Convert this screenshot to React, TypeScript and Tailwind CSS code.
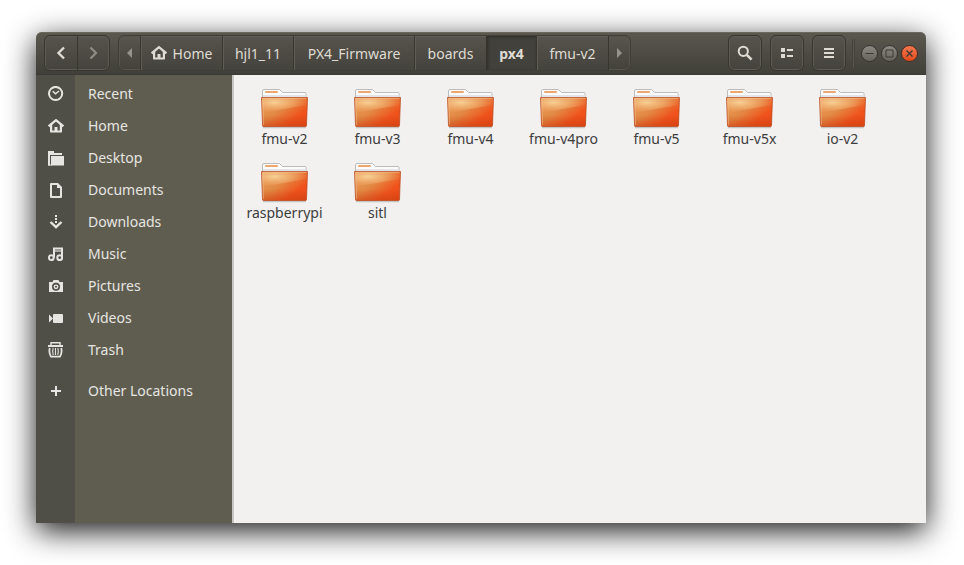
import type { ReactNode } from "react";

const folders = [
  "fmu-v2",
  "fmu-v3",
  "fmu-v4",
  "fmu-v4pro",
  "fmu-v5",
  "fmu-v5x",
  "io-v2",
  "raspberrypi",
  "sitl",
];

function Icon({ children }: { children: ReactNode }) {
  return (
    <svg className="h-4 w-4 shrink-0" viewBox="0 0 16 16" fill="none" stroke="currentColor" strokeWidth="2" aria-hidden="true">
      {children}
    </svg>
  );
}

function HomeIcon() {
  return (
    <Icon>
      <path strokeWidth="2.200" d="M0.600 8.300 8 2.100l7.400 6.200" />
      <path fill="currentColor" stroke="none" d="M2 7.500l2.200-1.700V12.500H6.500V9h3v3.500h2.300V5.800L14 7.500v6.300q0 .7-.7.700H2.700q-.7 0-.7-.7z" />
    </Icon>
  );
}

const places: { name: string; icon: ReactNode }[] = [
  {
    name: "Recent",
    icon: (
      <Icon>
        <circle cx="7.600" cy="7.500" r="6.600" />
        <path strokeWidth="1.500" d="M4.700 5.200 7.500 7.800 11 5" />
      </Icon>
    ),
  },
  { name: "Home", icon: <HomeIcon /> },
  {
    name: "Desktop",
    icon: (
      <Icon>
        <path fill="currentColor" stroke="none" d="M0 1h6v2h8v2H2v10.500H0z" />
        <path fill="currentColor" stroke="none" d="M3 6h13v9.500H3z" />
        <path fill="currentColor" stroke="none" d="M0 14.500h4v1H0z" />
      </Icon>
    ),
  },
  {
    name: "Documents",
    icon: (
      <Icon>
        <path d="M3 2h6.500L13 5.500V15H3z" strokeLinejoin="round" />
        <path fill="currentColor" stroke="none" d="M9 1.500 13.500 6H9z" />
      </Icon>
    ),
  },
  {
    name: "Downloads",
    icon: (
      <Icon>
        <path d="M8 1v9" strokeDasharray="2 1" />
        <path strokeWidth="2.400" d="M2.500 8 8 13.200 13.500 8" />
      </Icon>
    ),
  },
  {
    name: "Music",
    icon: (
      <Icon>
        <circle cx="3.300" cy="11.700" r="2.400" />
        <circle cx="11.700" cy="11.700" r="2.400" />
        <path d="M6 11.500V2.500h8v9" />
        <path strokeWidth="1.200" d="M6 5h8" />
      </Icon>
    ),
  },
  {
    name: "Pictures",
    icon: (
      <Icon>
        <path fill="currentColor" stroke="none" fillRule="evenodd" d="M1 4h3.500l1-2h5l1 2H15v10H1zM8 4.800a4 4 0 1 0 0 8 4 4 0 0 0 0-8z" />
        <circle cx="8" cy="8.800" r="2.400" fill="currentColor" stroke="none" />
        <circle cx="8" cy="8.800" r="1" fill="#504f47" stroke="none" />
      </Icon>
    ),
  },
  {
    name: "Videos",
    icon: (
      <Icon>
        <path fill="currentColor" stroke="none" d="M1 4.500 5 8.500l-4 4z" />
        <rect x="5" y="4" width="10" height="9" rx="1" fill="currentColor" stroke="none" />
      </Icon>
    ),
  },
  {
    name: "Trash",
    icon: (
      <Icon>
        <path d="M0 4h15" />
        <path strokeWidth="1.400" d="M3 3V.7h9V3" />
        <path strokeWidth="1.800" d="M1.800 6C1 9 1.500 12 3 14.600h9c1.500-2.600 2-5.600 1.200-8.600" />
        <path strokeWidth="1.100" d="M5.200 6c-.8 2.200-.8 4.400 0 7M7.500 6v7M9.800 6c.8 2.200.8 4.400 0 7" />
      </Icon>
    ),
  },
];

const crumbs: { label: string; width: string; home?: boolean; current?: boolean }[] = [
  { label: "Home", width: "w-[82px]", home: true },
  { label: "hjl1_11", width: "w-[71px]" },
  { label: "PX4_Firmware", width: "w-[121px]" },
  { label: "boards", width: "w-[72px]" },
  { label: "px4", width: "w-[50px]", current: true },
  { label: "fmu-v2", width: "w-[72px]" },
];

const frame =
  "flex h-9 rounded-md border border-[#37362f] bg-linear-to-b from-[#56544c] to-[#45433d] shadow-[inset_0_0_0_1px_#5d5b53]";

const flatFrame = "flex h-9 rounded-md border border-[#3f3e37] shadow-[inset_0_0_0_1px_#56544c]";

const raised = "border-l border-[#37362f] bg-linear-to-b from-[#56544c] to-[#45433d] shadow-[inset_1px_1px_0_#5f5d55]";

const windowButton = "rounded-full border border-[#35342f] bg-linear-to-b from-[#8b8981] to-[#65635b]";

function ToolButton({ label, children }: { label: string; children: ReactNode }) {
  return (
    <button type="button" aria-label={label} className={`${frame} w-[34px] items-center justify-center`}>
      {children}
    </button>
  );
}

function HeaderBar() {
  return (
    <header className="flex h-[43px] shrink-0 items-center justify-between rounded-t-md border-b border-[#3a3933] bg-linear-to-b from-[#5b594f] to-[#403f39] px-2 text-[#dfdbd2] shadow-[inset_0_1px_0_#6a685d]">
      <div className="flex gap-2">
        <div className={`${frame} w-[66px]`}>
          <button type="button" aria-label="Back" className="flex flex-1 items-center justify-center border-r border-[#37362f]">
            <Icon>
              <path strokeWidth="2.400" d="M11 2.500 5.500 8l5.500 5.500" />
            </Icon>
          </button>
          <button type="button" aria-label="Forward" className="flex flex-1 items-center justify-center text-[#8f8c84]">
            <Icon>
              <path strokeWidth="2.200" d="M5.500 2.500 11 8l-5.500 5.500" />
            </Icon>
          </button>
        </div>
        <nav aria-label="Path" className={flatFrame}>
          <button type="button" aria-label="Scroll left" className="flex w-[21px] items-center justify-center text-[#96938b]">
            <svg className="h-2.5 w-[5px]" viewBox="0 0 5 10" fill="currentColor" aria-hidden="true">
              <path d="M5 0v10L0 5z" />
            </svg>
          </button>
          {crumbs.map((c) => (
            <button
              key={c.label}
              type="button"
              aria-current={c.current ? "page" : undefined}
              className={`flex items-center justify-center gap-1.5 whitespace-nowrap ${c.width} ${
                c.current
                  ? "border-l border-[#33322d] bg-[#42413b] font-bold shadow-[inset_1px_1px_3px_#2f2e29]"
                  : raised
              }`}
            >
              {c.home && <HomeIcon />}
              <span className="pt-0.5">{c.label}</span>
            </button>
          ))}
          <button
            type="button"
            aria-label="Scroll right"
            className="flex w-[22px] items-center justify-center border-l border-[#37362f] text-[#96938b]"
          >
            <svg className="h-2.5 w-[5px]" viewBox="0 0 5 10" fill="currentColor" aria-hidden="true">
              <path d="M0 0v10l5-5z" />
            </svg>
          </button>
        </nav>
      </div>
      <div className="flex items-center gap-1.5">
        <div className="flex gap-2">
          <ToolButton label="Search">
            <Icon>
              <circle cx="6.300" cy="6.300" r="4.600" />
              <path strokeWidth="2.600" d="m9.800 9.800 4.800 4.800" />
            </Icon>
          </ToolButton>
          <ToolButton label="Change view">
            <Icon>
              <path fill="currentColor" stroke="none" d="M2 3h4v4H2zM2 9h4v4H2zM8 4h6v2H8zM8 10h6v2H8z" />
            </Icon>
          </ToolButton>
          <ToolButton label="Open menu">
            <Icon>
              <path d="M3 4h10M3 8h10M3 12h10" />
            </Icon>
          </ToolButton>
        </div>
        <div className="h-7 w-[3px] border-x border-[#45433c] bg-[#58564e]" />
        <div className="flex gap-[3px] text-[#3b3a34]">
          <button type="button" aria-label="Minimize" className={windowButton}>
            <svg className="h-[15px] w-[15px]" viewBox="0 0 15 15" fill="none" stroke="currentColor" aria-hidden="true">
              <path d="M3.500 7.500h8" />
            </svg>
          </button>
          <button type="button" aria-label="Maximize" className={windowButton}>
            <svg className="h-[15px] w-[15px]" viewBox="0 0 15 15" fill="none" stroke="currentColor" aria-hidden="true">
              <path d="M4 4h7v7H4z" />
            </svg>
          </button>
          <button type="button" aria-label="Close" className="rounded-full border border-[#4a2d22] bg-linear-to-b from-[#f4774f] to-[#df4a16]">
            <svg className="h-[15px] w-[15px]" viewBox="0 0 15 15" fill="none" stroke="currentColor" strokeWidth="1.300" aria-hidden="true">
              <path d="m4.500 4.500 6 6M10.500 4.500l-6 6" />
            </svg>
          </button>
        </div>
      </div>
    </header>
  );
}

function PlaceRow({ name, icon }: { name: string; icon: ReactNode }) {
  return (
    <li>
      <button type="button" className="flex h-8 w-full items-center gap-6 pl-3 text-left">
        {icon}
        {name}
      </button>
    </li>
  );
}

function Sidebar() {
  return (
    <aside className="w-[198px] shrink-0 border-r-2 border-[#c9c7c4] bg-linear-to-r from-[#504f47] from-[38px] via-[#44433c] via-[38px] to-[#5f5d50] to-[39px] pt-[3px] text-[#e6e5e1]">
      <ul>
        {places.map((p) => (
          <PlaceRow key={p.name} name={p.name} icon={p.icon} />
        ))}
      </ul>
      <ul className="pt-[9px]">
        <PlaceRow
          name="Other Locations"
          icon={
            <Icon>
              <path d="M8 3v10M3 8h10" />
            </Icon>
          }
        />
      </ul>
    </aside>
  );
}

function FolderIcon() {
  return (
    <svg className="h-10 w-12" viewBox="1 0 48 40" aria-hidden="true">
      <defs>
        <linearGradient id="front" x1="0" y1="0" x2="1" y2="0.800">
          <stop offset="0" stopColor="#e89a55" />
          <stop offset="0.450" stopColor="#e28a45" />
          <stop offset="0.800" stopColor="#f0531c" />
          <stop offset="1" stopColor="#ea4d18" />
        </linearGradient>
        <radialGradient id="glow" cx="0.280" cy="0.300" r="0.750">
          <stop offset="0" stopColor="#f7d097" />
          <stop offset="0.500" stopColor="#f0ac6c" stopOpacity="0.800" />
          <stop offset="1" stopColor="#f09a5c" stopOpacity="0" />
        </radialGradient>
        <linearGradient id="base" x1="0" y1="0" x2="0" y2="1">
          <stop offset="0.600" stopColor="#c63c10" stopOpacity="0" />
          <stop offset="1" stopColor="#c63c10" stopOpacity="0.500" />
        </linearGradient>
      </defs>
      <path d="M3 38.500h43" stroke="#000" strokeOpacity="0.180" strokeWidth="1.500" />
      <path d="M2.500 12V2q0-1.500 1.500-1.500h15.500l3 3H45q1 0 1 1V12z" fill="#fbfbfb" stroke="#bcbcbc" />
      <path d="M3 6h43v2.500H3z" fill="#e2e5e7" />
      <rect x="5" y="2" width="13" height="2" rx="1" fill="#eea66f" />
      <path d="M1.500 8.500h46L46.500 36.500q0 1-1 1H3.500q-1 0-1-1z" fill="url(#front)" />
      <path d="M2 9h45v7Q24 20 2 24z" fill="url(#glow)" />
      <path d="M1.500 8.500h46L46.500 36.500q0 1-1 1H3.500q-1 0-1-1z" fill="url(#base)" stroke="#b94a20" strokeOpacity="0.750" />
      <path d="M2.500 9.500h44M2.800 10l.7 26" fill="none" stroke="#f5c9a0" strokeOpacity="0.450" />
    </svg>
  );
}

export default function App() {
  return (
    <div className="flex min-h-screen flex-col bg-white pt-8 pr-[38px] pb-[42px] pl-9 font-['Noto_Sans','Open_Sans',sans-serif] text-sm">
      <div className="flex flex-1 flex-col rounded-t-md shadow-[0_8px_30px_rgba(0,0,0,0.9)]">
        <HeaderBar />
        <div className="flex flex-1">
          <Sidebar />
          <main className="flex-1 bg-[#f2f1f0] pt-3.5 pl-1 text-[#3d3d3d]">
            <ul className="grid grid-cols-[repeat(auto-fill,93px)]">
              {folders.map((name) => (
                <li key={name} className="flex h-[74px] flex-col items-center">
                  <FolderIcon />
                  <span>{name}</span>
                </li>
              ))}
            </ul>
          </main>
        </div>
      </div>
    </div>
  );
}
